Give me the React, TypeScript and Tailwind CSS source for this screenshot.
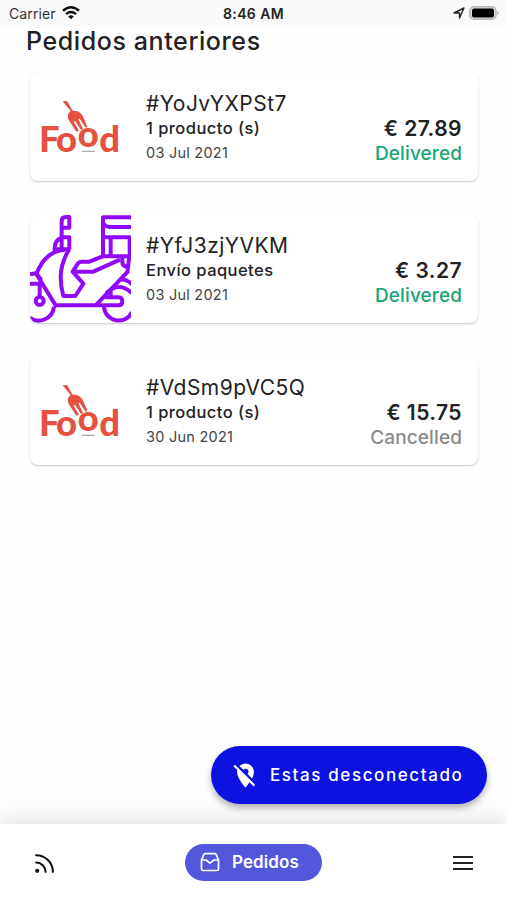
import type { ReactNode } from 'react';
import { Rss } from 'lucide-react';
import { MdLocationOff } from 'react-icons/md';

type OrderStatus = 'Delivered' | 'Cancelled';

interface Order {
  code: string;
  detail: string;
  date: string;
  total: string;
  status: OrderStatus;
  kind: 'food' | 'package';
}

const ORDERS: Order[] = [
  { code: '#YoJvYXPSt7', detail: '1 producto (s)', date: '03 Jul 2021', total: '€ 27.89', status: 'Delivered', kind: 'food' },
  { code: '#YfJ3zjYVKM', detail: 'Envío paquetes', date: '03 Jul 2021', total: '€ 3.27', status: 'Delivered', kind: 'package' },
  { code: '#VdSm9pVC5Q', detail: '1 producto (s)', date: '30 Jun 2021', total: '€ 15.75', status: 'Cancelled', kind: 'food' },
];

const STATUS_COLOR: Record<OrderStatus, string> = {
  Delivered: 'text-[#17a673]',
  Cancelled: 'text-[#8a8a8a]',
};

function FoodLogo() {
  return (
    <svg viewBox="18 9 303 324" className="h-[108px] w-[101px]" aria-label="Food">
      <g fill="#e5503f">
        <text x="45 96 161 226" y="245 245 231 245" fontFamily="Lato, sans-serif" fontWeight="900" fontSize="109">
          Food
        </text>
        {/* Fork */}
        <path d="M116 94l13-1 17 29c14-1 24 5 30 15l14 33-5 3-18-27-4 2 14 28-6 4-18-28-4 3 16 27-8 3-19-29c-9-14-9-24 2-33z" />
      </g>
      <path d="M174 244h38" stroke="#a5aaa0" strokeWidth="4" />
    </svg>
  );
}

function ScooterLogo() {
  return (
    <svg
      viewBox="6 9 303 324"
      className="h-[108px] w-[101px]"
      fill="none"
      stroke="#9209fa"
      strokeWidth="12"
      strokeLinejoin="round"
      aria-hidden="true"
    >
      {/* Mirror and handlebar */}
      <path d="M101 112V28q0-13 13-13h10v32h-23M101 76h23v36M101 78q-21 4-21 34M74 112h54" />
      {/* Body */}
      <path d="M25 186c14-36 40-70 85-72M122 114q-24 42-24 82 0 26 8 56h36l24-37-32-36 16-25q4-5 12-5h22l48-19" />
      <path d="M134 179h62l80-36M25 186l58 94M78 280h193q12 0 12-12t-12-12h-40M300 178L203 280" />
      <path d="M6 187l19-3 15 20M6 215h38" />
      {/* Delivery box */}
      <path d="M312 16h-87v117M225 32q7 13 20 13h67M225 76h80v56M248 76v56M220 133h92M283 138v12q0 12 13 14M304 133l-6 50" />
      {/* Wheels */}
      <circle cx="35" cy="267" r="12" />
      <path d="M35 255v-40M4 317A47 47 0 0 0 78 284M228 284A44 44 0 0 0 312 300M276 203q20-2 36 14M234 244q40-38 78 0M248 236v20" />
    </svg>
  );
}

function OrderCard({ order }: { order: Order }) {
  return (
    <li className="flex h-[108px] overflow-hidden rounded-lg bg-white shadow-[0_1px_2px_rgba(0,0,0,0.22)]">
      {order.kind === 'food' ? <FoodLogo /> : <ScooterLogo />}
      <div className="flex flex-1 justify-between pr-4 pl-[15px]">
        <div className="pt-[18px]">
          <h2 className="text-[21px] leading-[26px] tracking-[0.45px]">{order.code}</h2>
          <p className="text-[16.5px] leading-[23px] font-medium tracking-[0.45px]">{order.detail}</p>
          <p className="text-[14.5px] leading-[26px] tracking-[0.25px] text-[#444]">{order.date}</p>
        </div>
        <div className="pt-11 text-right">
          <p className="text-[21px] leading-6 font-semibold tracking-[0.45px]">{order.total}</p>
          <p className={`pt-px text-[19px] leading-6 font-medium tracking-[0.1px] ${STATUS_COLOR[order.status]}`}>{order.status}</p>
        </div>
      </div>
    </li>
  );
}

function StatusBar() {
  return (
    <div className="grid h-[26px] grid-cols-3 items-center bg-[#fafafa] px-2 text-[14px]">
      <div className="flex items-center gap-1.5 pl-px">
        <span className="tracking-[0.1px] text-[#333]">Carrier</span>
        <svg viewBox="0 0 18 14" className="h-3.5 w-[18px]" fill="none" stroke="#111" strokeWidth="2.5">
          <path d="M1 4.8q8-7 16 0M4 8.1q5-4.2 10 0" />
          <path d="M6.2 10.4q2.8-2.4 5.6 0L9 13.2z" fill="#111" stroke="none" />
        </svg>
      </div>
      <span className="text-center font-semibold tracking-[0.4px]">8:46 AM</span>
      <div className="flex items-center justify-end gap-1">
        <svg viewBox="0 0 12 12" className="size-3" fill="none" stroke="#222" strokeWidth="1.4" strokeLinejoin="round">
          <path d="M1 6L11 1 6.5 11V6z" />
        </svg>
        <svg viewBox="0 0 30 14" className="h-3.5 w-[30px]">
          <rect x="1" y=".8" width="26" height="12.4" rx="4" fill="#ddd" stroke="#b5b5b5" strokeWidth="1.6" />
          <rect x="3" y="2.5" width="22" height="9" rx="2" fill="#000" />
          <path d="M28.5 5q3 2 0 4z" fill="#aaa" />
        </svg>
      </div>
    </div>
  );
}

function OfflineButton() {
  return (
    <button className="flex h-[58px] w-[276px] items-center rounded-full bg-[#0c12e0] pl-5 text-white shadow-[0_4px_7px_rgba(0,0,0,0.3)]">
      <MdLocationOff className="size-[29px]" />
      <span className="ml-2.5 pt-0.5 text-[17px] font-medium tracking-[1.6px] whitespace-nowrap">Estas desconectado</span>
    </button>
  );
}

function NavItem({ label, children }: { label: string; children: ReactNode }) {
  return (
    <button aria-label={label} className="flex size-8 items-center justify-center pt-0.5">
      {children}
    </button>
  );
}

function BottomNav() {
  return (
    <nav className="flex h-[76px] items-center justify-between bg-white px-7 shadow-[0_0_24px_rgba(0,0,0,0.16)]">
      <NavItem label="Feed">
        <Rss className="size-[25px]" strokeWidth={2} color="#111" />
      </NavItem>
      <button className="flex h-[37px] w-[137px] items-center gap-3 rounded-full bg-[#5357db] pl-[15px] text-white">
        <svg viewBox="0 0 20 20" className="size-5" fill="none" stroke="currentColor" strokeWidth="1.7" strokeLinejoin="round">
          <path d="M1.5 8v9q0 1.500 1.500 1.500h14q1.500 0 1.500-1.500V8l-2.200-5.300Q15.900 1.600 14.800 1.600H5.200q-1.100 0-1.500 1.100zM1.500 8H6l4 3.200L14 8h4.500" />
        </svg>
        <span className="pt-0.5 text-[17px] font-semibold tracking-[0.1px]">Pedidos</span>
      </button>
      <NavItem label="Menú">
        <svg viewBox="0 0 20 16" className="h-4 w-5" stroke="#222" strokeWidth="2.2">
          <path d="M0 2h20M0 8h20M0 14h20" />
        </svg>
      </NavItem>
    </nav>
  );
}

export default function App() {
  return (
    <div className="flex h-[900px] w-[507px] flex-col overflow-hidden bg-[#fefefe] font-['Inter',sans-serif] text-[#222]">
      <StatusBar />
      <main className="flex-1">
        <h1 className="pl-[26px] text-[25px] leading-[30px] font-medium tracking-[0.6px]">Pedidos anteriores</h1>
        <ul className="mt-[17px] mr-[29px] ml-[30px] flex flex-col gap-[34px]">
          {ORDERS.map((order) => (
            <OrderCard key={order.code} order={order} />
          ))}
        </ul>
      </main>
      <div className="relative z-10 mr-5 mb-5 flex justify-end">
        <OfflineButton />
      </div>
      <BottomNav />
    </div>
  );
}
